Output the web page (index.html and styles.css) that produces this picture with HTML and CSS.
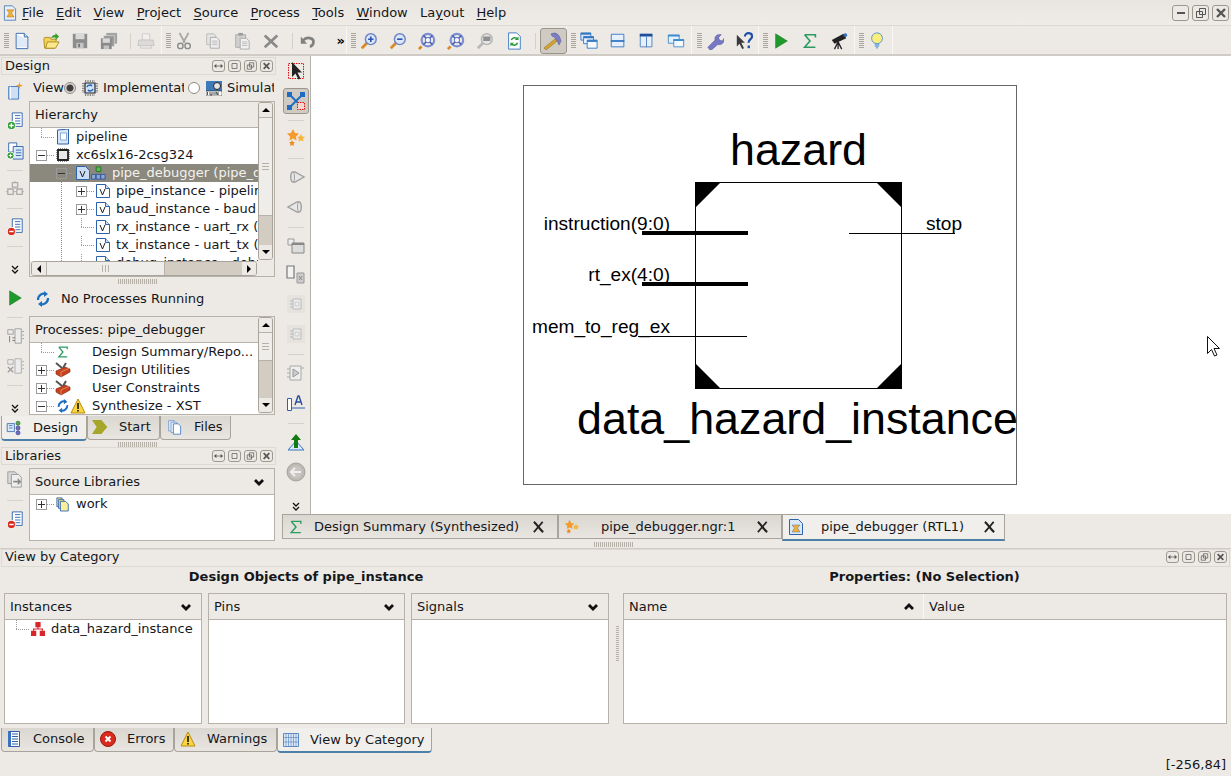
FILE: index.html
```html
<!DOCTYPE html>
<html lang="en">
<head>
    <meta charset="UTF-8">
    <title>ISE Project Navigator</title>
    <link rel="stylesheet" href="styles.css">
</head>
<body>
<svg class="defs" width="0" height="0">
    <defs>
        <symbol id="i-app" viewBox="0 0 20 20"><path d="M3 1h10l4 4v14H3z" fill="#e8f0fa" stroke="#3a6fb5"/><path d="M6 6h9l-3 4 3 5H6l3-5z" fill="#f2b035" stroke="#b5701a" stroke-width=".6"/></symbol>
        <symbol id="i-new" viewBox="0 0 20 20"><path d="M3.500 1.500h9l4 4v13h-13z" fill="#fff" stroke="#2d62ad"/><path d="M12.500 1.500v4h4" fill="#cfe0f5" stroke="#2d62ad"/><path d="M4.500 3v14h11V8z" fill="#dfeaf8"/></symbol>
        <symbol id="i-open" viewBox="0 0 20 20"><path d="M2 8l1-2h6l1 2h6l-2 10H3z" fill="#f4d25a" stroke="#a98a1e"/><path d="M4 18l2-7h13l-4 7z" fill="#fbe88a" stroke="#a98a1e"/><path d="M10 7c1-3 3-4 5-4V1l4 4-4 4V6c-2 0-4 0-5 1z" fill="#3da02e"/></symbol>
        <symbol id="i-save" viewBox="0 0 20 20"><path d="M2 2h16v16H2z" fill="#8d8d8d"/><path d="M5 2h10v6H5z" fill="#d9d9d9"/><path d="M6 12h8v6H6z" fill="#c4c4c4"/><path d="M8 13h2v4H8z" fill="#777"/></symbol>
        <symbol id="i-saveall" viewBox="0 0 20 20"><path d="M7 1h12v12H7z" fill="#a4a4a4"/><path d="M4 4h12v12H4z" fill="#999" stroke="#e8e8e8" stroke-width=".6"/><path d="M1 7h12v12H1z" fill="#8a8a8a"/><path d="M3 7h8v5H3z" fill="#d9d9d9"/><path d="M4 15h6v4H4z" fill="#c4c4c4"/></symbol>
        <symbol id="i-print" viewBox="0 0 20 20"><path d="M6 2h8v7H6z" fill="#f3f3f3" stroke="#c0c0c0"/><path d="M2 9h16l1 6H1z" fill="#d6d6d6" stroke="#b4b4b4"/><path d="M4 15h12v3H4z" fill="#e6e6e6" stroke="#bdbdbd"/></symbol>
        <symbol id="i-cut" viewBox="0 0 20 20"><path d="M5 1l6 11M15 1L9 12" stroke="#a5a5a5" stroke-width="2" fill="none"/><circle cx="6" cy="15.500" r="3" fill="none" stroke="#8d8d8d" stroke-width="1.600"/><circle cx="14" cy="15.500" r="3" fill="none" stroke="#8d8d8d" stroke-width="1.600"/></symbol>
        <symbol id="i-copy" viewBox="0 0 20 20"><path d="M3 2h8l2 2v10H3z" fill="#e4e4e4" stroke="#b8b8b8"/><path d="M7 6h7l3 3v9H7z" fill="#efefef" stroke="#a8a8a8"/><path d="M9 10h6M9 12h6M9 14h6" stroke="#bbb"/></symbol>
        <symbol id="i-paste" viewBox="0 0 20 20"><path d="M3 3h11v14H3z" fill="#d0d0d0" stroke="#aaa"/><path d="M6 1h5v3H6z" fill="#9a9a9a"/><path d="M8 7h7l3 3v9H8z" fill="#f0f0f0" stroke="#a8a8a8"/><path d="M10 11h6M10 13h6M10 15h6" stroke="#bbb"/></symbol>
        <symbol id="i-del" viewBox="0 0 20 20"><path d="M3 4l14 13M17 4L3 17" stroke="#8a8a8a" stroke-width="3" fill="none"/></symbol>
        <symbol id="i-undo" viewBox="0 0 20 20"><path d="M5 9c3-4 12-3 11 3-.3 2-2 4-4 4" stroke="#808080" stroke-width="3" fill="none"/><path d="M2 5v8h7z" fill="#808080"/></symbol>
        <symbol id="i-zin" viewBox="0 0 20 20"><path d="M2 18l6-6" stroke="#d88a28" stroke-width="3"/><circle cx="12" cy="8" r="6" fill="#dbe6f7" stroke="#6f85c8" stroke-width="1.600"/><path d="M9 8h6M12 5v6" stroke="#2b55b5" stroke-width="1.800"/></symbol>
        <symbol id="i-zout" viewBox="0 0 20 20"><path d="M2 18l6-6" stroke="#d88a28" stroke-width="3"/><circle cx="12" cy="8" r="6" fill="#dbe6f7" stroke="#6f85c8" stroke-width="1.600"/><path d="M9 8h6" stroke="#2b55b5" stroke-width="1.800"/></symbol>
        <symbol id="i-zfull" viewBox="0 0 20 20"><path d="M1 19l3-3" stroke="#d88a28" stroke-width="3"/><circle cx="11" cy="9" r="7" fill="none" stroke="#7d8ed0" stroke-width="2.400"/><circle cx="11" cy="9" r="3" fill="#f2f4fb" stroke="#4a63bd"/><path d="M6 4l3 3M16 4l-3 3M6 14l3-3M16 14l-3-3" stroke="#3e58b4" stroke-width="1.600"/></symbol>
        <symbol id="i-zsel" viewBox="0 0 20 20"><path d="M2 18l6-6" stroke="#b9b9b9" stroke-width="3"/><circle cx="12" cy="8" r="6" fill="#e4e4e4" stroke="#b5b5b5" stroke-width="1.600"/><path d="M8 5h8v5H8z" fill="#8f8f8f"/></symbol>
        <symbol id="i-refresh" viewBox="0 0 20 20"><path d="M4 1h9l4 4v14H4z" fill="#fff" stroke="#3a74c0"/><path d="M7 9a4 4 0 0 1 7-1M14 12a4 4 0 0 1-7 1" stroke="#2c9a3a" stroke-width="1.800" fill="none"/><path d="M15 5v4h-4zM6 16v-4h4z" fill="#2c9a3a"/></symbol>
        <symbol id="i-hammer" viewBox="0 0 20 20"><path d="M1 17l11-9 2 2-11 9z" fill="#d5a52c" stroke="#94701a" stroke-width=".6"/><path d="M8 3c4-2 8-1 10 7l-2 4c-2-5-3-7-7-9z" fill="#7b7fc2" stroke="#5a5d9e" stroke-width=".6"/></symbol>
        <symbol id="i-cascade" viewBox="0 0 20 20"><path d="M1 1h11v8H1z" fill="#dbe9f9" stroke="#3277c4"/><path d="M1 1h11v2H1z" fill="#3277c4"/><path d="M4 5h11v8H4z" fill="#eef5fd" stroke="#3277c4"/><path d="M4 5h11v2H4z" fill="#3277c4"/><path d="M8 9h11v9H8z" fill="#f4f9fe" stroke="#3277c4"/><path d="M8 9h11v2H8z" fill="#3277c4"/></symbol>
        <symbol id="i-hsplit" viewBox="0 0 20 20"><path d="M2.500 2.500h14v14h-14z" fill="#e6f0fb" stroke="#3277c4"/><path d="M2 9h15v2H2z" fill="#3277c4"/></symbol>
        <symbol id="i-vsplit" viewBox="0 0 20 20"><path d="M2.500 2.500h13v14h-13z" fill="#e6f0fb" stroke="#4b7fc0"/><path d="M2 2h14v3H2z" fill="#1f4f9a"/><path d="M9 5h1v12H9z" fill="#4b7fc0"/></symbol>
        <symbol id="i-tile" viewBox="0 0 20 20"><path d="M1.500 3.500h12v9h-12z" fill="#e6f0fb" stroke="#3d8ad0"/><path d="M1 3h13v2H1z" fill="#3d8ad0"/><path d="M7.500 8.500h11v8h-11z" fill="#f2f8fe" stroke="#3d8ad0"/><path d="M7 8h12v2H7z" fill="#3d8ad0"/></symbol>
        <symbol id="i-wrench" viewBox="0 0 20 20"><path d="M2 17l8-8c-1-4 2-7 7-6l-3 3 1 3 3 1 2-3c1 5-3 8-7 7l-8 7z" fill="#7678c4" stroke="#4f5196" stroke-width=".5"/></symbol>
        <symbol id="i-help" viewBox="0 0 20 20"><path d="M2 3v13l3-3 3 6 2-1-3-6h4z" fill="#3a3a3a"/><path d="M11 5c0-5 8-5 8 0 0 3-4 3-4 7" fill="none" stroke="#1f4fa8" stroke-width="2.400"/><path d="M14 15h2.600v3H14z" fill="#1f4fa8"/></symbol>
        <symbol id="i-run" viewBox="0 0 20 20"><path d="M4 2l13 8-13 8z" fill="#1f9a2c" stroke="#187522" stroke-width=".6"/></symbol>
        <symbol id="i-sigma" viewBox="0 0 20 20"><path d="M4 3h12v3M16 17H4l6-7-6-7" fill="none" stroke="#2b9b62" stroke-width="1.800"/></symbol>
        <symbol id="i-scope" viewBox="0 0 20 20"><path d="M2 9l13-7 3 5-13 6z" fill="#222"/><circle cx="17" cy="3.500" r="2" fill="#2f6fc0"/><path d="M9 11l-4 8M9 11v8M9 11l4 8" stroke="#222" stroke-width="1.400"/></symbol>
        <symbol id="i-bulb" viewBox="0 0 20 20"><circle cx="10" cy="7" r="6" fill="#fbee7a" stroke="#4d90cf"/><path d="M8 13h4v3H8z" fill="#8bbce6" stroke="#4d90cf" stroke-width=".6"/><path d="M9 17h2l-1 2z" fill="#2f6fc0"/></symbol>
        <symbol id="i-srcnew" viewBox="0 0 20 20"><path d="M3 5h11v14H3z" fill="#cfe0f5" stroke="#3a74c0"/><path d="M5 5v14" stroke="#fff"/><path d="M15 0l1 3 3 1-3 1-1 3-1-3-3-1 3-1z" fill="#f29a2e"/></symbol>
        <symbol id="i-srcadd" viewBox="0 0 20 20"><path d="M7 1h11v15H7z" fill="#fff" stroke="#2d62ad"/><path d="M10 4h6M10 7h6M10 10h6M10 13h6" stroke="#2d62ad"/><circle cx="6" cy="15" r="4.500" fill="#2f9e35" stroke="#fff"/><path d="M3.500 15h5M6 12.500v5" stroke="#fff" stroke-width="1.400"/></symbol>
        <symbol id="i-srccopy" viewBox="0 0 20 20"><path d="M3 1h9v10H3z" fill="#fff" stroke="#2d62ad"/><path d="M8 5h11v14H8z" fill="#dbe8f8" stroke="#2d62ad"/><path d="M11 9h6M11 12h6M11 15h6" stroke="#2d62ad"/><circle cx="5" cy="15" r="4" fill="#2f9e35" stroke="#fff"/><path d="M3 15h4M5 13v4" stroke="#fff" stroke-width="1.200"/></symbol>
        <symbol id="i-srcdel" viewBox="0 0 20 20"><path d="M7 1h11v15H7z" fill="#fff" stroke="#2d62ad"/><path d="M10 4h6M10 7h6M10 10h6M10 13h6" stroke="#2d62ad"/><circle cx="6" cy="15" r="4.500" fill="#d8281c" stroke="#fff"/><path d="M3.500 15h5" stroke="#fff" stroke-width="1.600"/></symbol>
        <symbol id="i-chips" viewBox="0 0 20 20"><path d="M7 3h6v5H7zM2 10h6v6H2zM12 10h6v6h-6z" fill="none" stroke="#aaa" stroke-width="1.400"/><path d="M10 1v2M10 8v2M0 13h2M8 13h4M18 13h2" stroke="#aaa"/></symbol>
        <symbol id="i-pinout" viewBox="0 0 20 20"><path d="M10 2h7v16h-7zM2 3h6v5H2z" fill="#ececec" stroke="#9c9c9c"/><path d="M7 12h3M7 15h3M4 10v7" stroke="#777"/><path d="M18 5h2M18 9h2M18 13h2" stroke="#9c9c9c"/></symbol>
        <symbol id="i-pinx" viewBox="0 0 20 20"><path d="M10 2h7v16h-7zM2 3h6v5H2z" fill="#ececec" stroke="#aaa"/><path d="M2 11l6 6M8 11l-6 6" stroke="#999" stroke-width="1.400"/><path d="M18 5h2M18 9h2M18 13h2" stroke="#aaa"/></symbol>
        <symbol id="i-libcopy" viewBox="0 0 20 20"><path d="M2 2h8l3 3v10H2z" fill="#d8d8d8" stroke="#999"/><path d="M6 5h8l3 3v11H6z" fill="#eee" stroke="#999"/><path d="M8 12h5V9l4 4-4 4v-3H8z" fill="#8b8b8b"/></symbol>
        <symbol id="i-chip" viewBox="1 1 14 14"><path d="M3 3h10v10H3z" fill="#e8e8e8" stroke="#222" stroke-width="1.800"/><path d="M2 3v10M14 3v10M3 2h10M3 14h10" stroke="#222" stroke-dasharray="1 1"/></symbol>
        <symbol id="i-impl" viewBox="0 0 16 16"><path d="M3 3h10v10H3z" fill="#cfe1f7" stroke="#222" stroke-width="1.200"/><path d="M1 3v10M15 3v10M3 1h10M3 15h10" stroke="#222" stroke-dasharray="1.200 1.200"/><path d="M5 7a3 3 0 0 1 5-1M11 9a3 3 0 0 1-5 1" stroke="#1d5fb0" stroke-width="1.400" fill="none"/></symbol>
        <symbol id="i-sim" viewBox="0 0 16 16"><path d="M0 1h16v10H0z" fill="#3d7ab8"/><circle cx="11" cy="6" r="3.500" fill="#e5e5e5" stroke="#222"/><path d="M0 11h16v5H0z" fill="#fff" stroke="#222" stroke-width=".6"/><path d="M1.500 12v3M4 12v3h2v-3M8 12v3M10 15v-3l2 3v-3" stroke="#222" stroke-width=".8" fill="none"/></symbol>
        <symbol id="i-page" viewBox="1 0 13 16"><path d="M2 1l11-1v15H2z" fill="#d9e7f7" stroke="#2d62ad"/><path d="M5 4h6v7H5z" fill="#fff" stroke="#6f9ad0" stroke-width=".8"/></symbol>
        <symbol id="i-vfile" viewBox="1 1 14 14"><path d="M1.500 1.500h9l4 4v9h-13z" fill="#fff" stroke="#2d62ad"/><path d="M10.500 1.500v4h4" fill="#cfe0f5" stroke="#2d62ad"/><path d="M5 6l2.500 6L10 6" fill="none" stroke="#222"/></symbol>
        <symbol id="i-vsel" viewBox="1 1 14 14"><path d="M1.500 1.500h9l4 4v9h-13z" fill="#c9ddf5" stroke="#2d62ad"/><path d="M5 6l2.500 6L10 6" fill="none" stroke="#222"/></symbol>
        <symbol id="i-grid4" viewBox="0 0 16 16"><path d="M5.500 1.500h5v5h-5z" fill="#5cb85c" stroke="#1f7a1f"/><path d="M.5 9.500h4.500v5H.5zM5.500 9.500H10v5H5.500zM10.500 9.500H15v5h-4.500z" fill="#8aa8d8" stroke="#35589c"/></symbol>
        <symbol id="i-tools" viewBox="0 0 16 16"><path d="M1 9l9-4 5 2v3l-9 5-5-3z" fill="#c8421e" stroke="#7a220e" stroke-width=".6"/><path d="M6 10l9-4M6 10v5" stroke="#eba184" stroke-width=".7"/><path d="M1 1l6 5M11 1L8 6" stroke="#555" stroke-width="2"/></symbol>
        <symbol id="i-sync" viewBox="0 0 16 16"><path d="M3 9a6 6 0 0 1 8-6" fill="none" stroke="#1b6fc0" stroke-width="2.200"/><path d="M13 7a6 6 0 0 1-8 6" fill="none" stroke="#1b6fc0" stroke-width="2.200"/><path d="M9 0v6l4-3zM7 16v-6l-4 3z" fill="#1b6fc0"/></symbol>
        <symbol id="i-warn" viewBox="0 0 16 16"><path d="M8 1l7 14H1z" fill="#fbd63d" stroke="#b68b14"/><path d="M7.200 5h1.600v6H7.200zM7.200 12h1.600v1.600H7.200z" fill="#111"/></symbol>
        <symbol id="i-err" viewBox="0 0 16 16"><circle cx="8" cy="8" r="7.500" fill="#d92a1c" stroke="#9a160d"/><path d="M5.500 5.500l5 5M10.500 5.500l-5 5" stroke="#fff" stroke-width="2"/></symbol>
        <symbol id="i-folder" viewBox="0 0 16 16"><path d="M1 1h6v10H1z" fill="#f7e27a" stroke="#2d62ad"/><path d="M3 3h6v10H3z" fill="#f7e27a" stroke="#2d62ad"/><path d="M5 5h6l3 3v8H5z" fill="#fbef9e" stroke="#2d62ad"/></symbol>
        <symbol id="i-star" viewBox="0 0 20 20"><path d="M7 1l2 4 4 .5-3 3 .5 4-3.500-2-3.500 2 .5-4-3-3 4-.5z" fill="#f59a2c"/><path d="M15 6l1.300 2.500 2.700.3-2 2 .5 2.700-2.500-1.300-2.500 1.300.5-2.700-2-2 2.700-.3z" fill="#f6b53e"/><path d="M6 12l1 2 2 .3-1.500 1.500.4 2.200L6 17l-1.900 1 .4-2.200L3 14.300l2-.3z" fill="#ee8a22"/></symbol>
        <symbol id="i-select" viewBox="0 0 20 20"><path d="M2.500 2.500h15v15h-15z" fill="none" stroke="#e01010" stroke-dasharray="1.500 1"/><path d="M6 1v15l3.500-3.500 3 6 2-1-3-6H16z" fill="#222"/></symbol>
        <symbol id="i-net" viewBox="0 0 20 20"><path d="M4 4l12 12M16 4L4 16" stroke="#1f6bc4" stroke-width="1.800"/><path d="M1 1h5v5H1zM14 1h5v5h-5zM1 14h5v5H1z" fill="#1f6bc4"/><path d="M11.500 11.500h7v7h-7z" fill="#f4d6d0" stroke="#e01010" stroke-dasharray="1.500 1"/></symbol>
        <symbol id="i-tri-r" viewBox="0 0 20 20"><path d="M7 5h2l9 5-9 5H7c-3 0-3-10 0-10z" fill="#e6e6e6" stroke="#a0a0a0" stroke-width="1.400"/><path d="M7 5c2 0 2 10 0 10" fill="none" stroke="#a0a0a0"/></symbol>
        <symbol id="i-tri-l" viewBox="0 0 20 20"><path d="M13 5h-2l-9 5 9 5h2c3 0 3-10 0-10z" fill="#e6e6e6" stroke="#a0a0a0" stroke-width="1.400"/><path d="M13 5c-2 0-2 10 0 10" fill="none" stroke="#a0a0a0"/></symbol>
        <symbol id="i-panel" viewBox="0 0 20 20"><path d="M2 3h6v6H2z" fill="#eee" stroke="#999"/><path d="M6 7h12v10H6z" fill="#ddd" stroke="#888"/><path d="M6 7h12v2H6z" fill="#888"/></symbol>
        <symbol id="i-pair" viewBox="0 0 20 20"><path d="M1 2h7v12H1z" fill="#f2f2f2" stroke="#777" stroke-width="1.200"/><path d="M11 9h7v10h-7z" fill="#ccc" stroke="#999"/><path d="M13 12l3 4M16 12l-3 4" stroke="#888"/></symbol>
        <symbol id="i-soft" viewBox="0 0 20 20"><path d="M1 1h18v18H1z" fill="#e6e3de"/><path d="M7 5h8v10H7z" fill="#ececec" stroke="#bbb"/><path d="M4 7h3M4 10h3M4 13h3" stroke="#bbb"/><path d="M9 8h4v4H9z" fill="none" stroke="#ccc"/></symbol>
        <symbol id="i-buf" viewBox="0 0 20 20"><path d="M4 3h11v14H4z" fill="#eee" stroke="#aaa"/><path d="M7 6l6 4-6 4z" fill="#ccc" stroke="#999"/><path d="M1 6h3M1 10h3M1 14h3M15 5h3" stroke="#aaa"/></symbol>
        <symbol id="i-text" viewBox="0 0 20 20"><path d="M1.500 5.500h4v12h-4z" fill="#fff" stroke="#2d62ad"/><path d="M9 12l3-9h1l3 9M10.300 9h4.400" fill="none" stroke="#2d4fa0" stroke-width="1.400"/><path d="M6 15h13" stroke="#2d62ad"/></symbol>
        <symbol id="i-up" viewBox="0 0 20 20"><path d="M2 18l8-9 8 9z" fill="#dbe8f8" stroke="#3a74c0"/><path d="M10 2l5 6h-3v8H8V8H5z" fill="#137a13"/></symbol>
        <symbol id="i-back" viewBox="0 0 20 20"><circle cx="10" cy="10" r="9" fill="#bdbab6" stroke="#a5a29e"/><circle cx="10" cy="10" r="6" fill="#c9c6c2"/><path d="M15 10H6M9 6l-4 4 4 4" fill="none" stroke="#eee" stroke-width="2"/></symbol>
        <symbol id="i-design" viewBox="0 0 20 20"><path d="M1.500 4.500h9v10h-9z" fill="#dbe8f8" stroke="#2d62ad"/><path d="M4 7h4M4 10h4" stroke="#2d62ad"/><circle cx="15" cy="4" r="2.500" fill="#5aa25a" stroke="#2d7a2d"/><circle cx="15" cy="10" r="2.500" fill="#6f6fc0" stroke="#444499"/><circle cx="15" cy="16" r="2.500" fill="#6f6fc0" stroke="#444499"/></symbol>
        <symbol id="i-start" viewBox="0 0 24 16" preserveAspectRatio="none"><path d="M0 1h14l9 7-9 7H0l7-7z" fill="#a6a629"/></symbol>
        <symbol id="i-files" viewBox="0 0 20 20"><path d="M2 2h7v13H2z" fill="#dbe8f8" stroke="#7c9cca"/><path d="M5 4h7v13H5z" fill="#e9f0fb" stroke="#7c9cca"/><path d="M8 6h6l3 3v10H8z" fill="#fff" stroke="#3a74c0"/></symbol>
        <symbol id="i-console" viewBox="0 0 16 16"><path d="M2.500 .5h11v15h-11z" fill="#fff" stroke="#2d62ad"/><path d="M2 1h3v14H2z" fill="#3a74c0"/><path d="M6 3h6M6 5.500h6M6 8h6M6 10.500h6M6 13h6" stroke="#2d62ad"/></symbol>
        <symbol id="i-table" viewBox="0 0 16 16"><path d="M.5 1.500h15v13H.5z" fill="#e1ebf8" stroke="#5f8ac4"/><path d="M5.500 1v14M10.500 1v14M1 5.500h14M1 10h14M3 1v14M8 1v14M13 1v14" stroke="#5f8ac4" stroke-width=".7"/></symbol>
        <symbol id="i-hier" viewBox="0 0 16 16"><path d="M5 0h6v6H5zM0 10h6v6H0zM10 10h6v6h-6z" fill="#d8262a"/><path d="M8 5v3M3 10V8h10v2" fill="none" stroke="#d8262a" stroke-width="1.400"/></symbol>
        <symbol id="i-rtl" viewBox="0 0 16 16"><path d="M1.500 .5h9l4 4v11h-13z" fill="#dbe8f8" stroke="#2d62ad"/><path d="M4 6h8l-2.500 3L12 13H4l2.500-4z" fill="#f2b035" stroke="#2d62ad" stroke-width=".4"/></symbol>
        <symbol id="i-max" viewBox="0 0 14 14"><path d="M3.500 3.500h7v7h-7z" fill="none" stroke="#555"/></symbol>
        <symbol id="i-float" viewBox="0 0 14 14"><path d="M5.500 2.500h6v6h-6zM2.500 5.500h6v6h-6z" fill="none" stroke="#555"/></symbol>
        <symbol id="i-close" viewBox="0 0 14 14"><path d="M3 3l8 8M11 3l-8 8" stroke="#555" stroke-width="2.400"/></symbol>
        <symbol id="i-dock" viewBox="0 0 14 14"><path d="M1 7h12" stroke="#555"/><path d="M4 4L1 7l3 3zM10 4l3 3-3 3z" fill="#555"/></symbol>
        <symbol id="i-min" viewBox="0 0 14 14"><path d="M3 6h8v2H3z" fill="#555"/></symbol>
        <symbol id="i-tabx" viewBox="0 0 14 14"><path d="M2 1.500c3 2 6 8 10 11" fill="none" stroke="#222" stroke-width="2.400"/><path d="M11.500 1.500L2 12.500" stroke="#222" stroke-width="1.800"/></symbol>
        <symbol id="i-chev" viewBox="0 0 10 8"><path d="M0 3l5 5 5-5-2-2-3 3-3-3z" fill="#111"/></symbol>
        <symbol id="i-dchev" viewBox="0 0 8 10"><path d="M1 1l3 3 3-3M1 5l3 3 3-3" fill="none" stroke="#111" stroke-width="1.300"/></symbol>
    </defs>
</svg>

<div class="menubar">
    <svg class="menu-icon"><use href="#i-app"/></svg>
    <span class="menu-item"><u>F</u>ile</span>
    <span class="menu-item"><u>E</u>dit</span>
    <span class="menu-item"><u>V</u>iew</span>
    <span class="menu-item"><u>P</u>roject</span>
    <span class="menu-item"><u>S</u>ource</span>
    <span class="menu-item"><u>P</u>rocess</span>
    <span class="menu-item"><u>T</u>ools</span>
    <span class="menu-item"><u>W</u>indow</span>
    <span class="menu-item">La<u>y</u>out</span>
    <span class="menu-item"><u>H</u>elp</span>
    <div class="win-controls">
        <span class="win-btn big"><svg><use href="#i-min"/></svg></span>
        <span class="win-btn big"><svg><use href="#i-float"/></svg></span>
        <span class="win-btn big"><svg><use href="#i-close"/></svg></span>
    </div>
</div>

<div class="toolbar">
    <div class="tb-group g-file">
        <i class="grip"></i>
        <svg class="tb"><use href="#i-new"/></svg>
        <svg class="tb"><use href="#i-open"/></svg>
        <svg class="tb"><use href="#i-save"/></svg>
        <svg class="tb"><use href="#i-saveall"/></svg>
        <i class="tb-sep"></i>
        <svg class="tb faint"><use href="#i-print"/></svg>
    </div>
    <div class="tb-group g-edit">
        <i class="grip"></i>
        <svg class="tb"><use href="#i-cut"/></svg>
        <svg class="tb"><use href="#i-copy"/></svg>
        <svg class="tb"><use href="#i-paste"/></svg>
        <svg class="tb"><use href="#i-del"/></svg>
        <i class="tb-sep"></i>
        <svg class="tb"><use href="#i-undo"/></svg>
        <span class="more">»</span>
    </div>
    <div class="tb-group g-zoom">
        <i class="grip"></i>
        <svg class="tb"><use href="#i-zin"/></svg>
        <svg class="tb"><use href="#i-zout"/></svg>
        <svg class="tb"><use href="#i-zfull"/></svg>
        <svg class="tb"><use href="#i-zfull"/></svg>
        <svg class="tb"><use href="#i-zsel"/></svg>
        <svg class="tb"><use href="#i-refresh"/></svg>
        <i class="tb-sep"></i>
        <span class="tb-active"><svg class="tb-in"><use href="#i-hammer"/></svg></span>
    </div>
    <div class="tb-group g-win">
        <i class="grip"></i>
        <svg class="tb"><use href="#i-cascade"/></svg>
        <svg class="tb"><use href="#i-hsplit"/></svg>
        <svg class="tb"><use href="#i-vsplit"/></svg>
        <svg class="tb"><use href="#i-tile"/></svg>
    </div>
    <div class="tb-group g-help">
        <i class="grip"></i>
        <svg class="tb"><use href="#i-wrench"/></svg>
        <svg class="tb"><use href="#i-help"/></svg>
    </div>
    <div class="tb-group g-run">
        <i class="grip"></i>
        <svg class="tb"><use href="#i-run"/></svg>
        <svg class="tb"><use href="#i-sigma"/></svg>
        <svg class="tb"><use href="#i-scope"/></svg>
    </div>
    <div class="tb-group">
        <i class="grip"></i>
        <svg class="tb"><use href="#i-bulb"/></svg>
    </div>
</div>

<div class="main">
    <div class="left">
        <div class="titlebar">
            <span>Design</span>
            <div class="dock-btns">
                <span class="win-btn"><svg><use href="#i-dock"/></svg></span>
                <span class="win-btn"><svg><use href="#i-max"/></svg></span>
                <span class="win-btn"><svg><use href="#i-float"/></svg></span>
                <span class="win-btn"><svg><use href="#i-close"/></svg></span>
            </div>
        </div>

        <div class="section sec-hier">
            <div class="strip">
                <svg class="st"><use href="#i-srcnew"/></svg>
                <svg class="st"><use href="#i-srcadd"/></svg>
                <svg class="st"><use href="#i-srccopy"/></svg>
                <i class="st-sep"></i>
                <svg class="st"><use href="#i-chips"/></svg>
                <i class="st-sep"></i>
                <svg class="st"><use href="#i-srcdel"/></svg>
                <i class="st-sep"></i>
                <svg class="dchev"><use href="#i-dchev"/></svg>
            </div>
            <div class="sec-body">
                <div class="view-row">
                    <span class="view-lbl">View</span>
                    <i class="radio on"></i>
                    <svg class="view-ic"><use href="#i-impl"/></svg>
                    <span class="view-txt w-impl">Implementation</span>
                    <i class="radio"></i>
                    <svg class="view-ic"><use href="#i-sim"/></svg>
                    <span class="view-txt w-sim">Simulation</span>
                </div>
                <div class="frame frame-hier">
                    <div class="frame-main">
                        <div class="frame-head">Hierarchy</div>
                        <div class="tree">
                            <div class="row lvl0 leaf"><i class="stub"></i><svg class="ic"><use href="#i-page"/></svg><span class="lbl">pipeline</span></div>
                            <div class="row lvl0"><i class="twist minus"></i><svg class="ic"><use href="#i-chip"/></svg><span class="lbl">xc6slx16-2csg324</span></div>
                            <div class="row lvl1 selected"><i class="twist minus"></i><svg class="ic"><use href="#i-vsel"/></svg><svg class="ic2"><use href="#i-grid4"/></svg><span class="lbl">pipe_debugger (pipe_debugger.v)</span></div>
                            <div class="row lvl2 guide"><i class="twist plus"></i><svg class="ic"><use href="#i-vfile"/></svg><span class="lbl">pipe_instance - pipeline (pipeline.v)</span></div>
                            <div class="row lvl2 guide"><i class="twist plus"></i><svg class="ic"><use href="#i-vfile"/></svg><span class="lbl">baud_instance - baud (baud.v)</span></div>
                            <div class="row lvl2 guide leaf"><i class="stub"></i><svg class="ic"><use href="#i-vfile"/></svg><span class="lbl">rx_instance - uart_rx (uart_rx.v)</span></div>
                            <div class="row lvl2 guide leaf"><i class="stub"></i><svg class="ic"><use href="#i-vfile"/></svg><span class="lbl">tx_instance - uart_tx (uart_tx.v)</span></div>
                            <div class="row lvl2 guide leaf"><i class="stub"></i><svg class="ic"><use href="#i-vfile"/></svg><span class="lbl">debug_instance - debug (debug.v)</span></div>
                        </div>
                        <div class="hscroll">
                            <span class="sb-btn"><i class="arr left-a"></i></span>
                            <span class="sb-thumb-h"><i class="sb-grip-h"></i></span>
                            <span class="sb-track"></span>
                            <span class="sb-btn"><i class="arr right-a"></i></span>
                        </div>
                    </div>
                    <div class="vscroll">
                        <span class="sb-btn"><i class="arr up-a"></i></span>
                        <span class="sb-thumb-v t-hier"><i class="sb-grip-v"></i></span>
                        <span class="sb-track"></span>
                        <span class="sb-btn"><i class="arr down-a"></i></span>
                    </div>
                </div>
            </div>
        </div>

        <div class="splitter"><i class="split-grip"></i></div>

        <div class="section sec-proc">
            <div class="strip">
                <svg class="st st-run"><use href="#i-run"/></svg>
                <i class="st-sep"></i>
                <svg class="st"><use href="#i-pinout"/></svg>
                <svg class="st"><use href="#i-pinx"/></svg>
                <i class="st-sep"></i>
                <svg class="dchev"><use href="#i-dchev"/></svg>
            </div>
            <div class="sec-body">
                <div class="status-row"><svg class="ic-s"><use href="#i-sync"/></svg><span>No Processes Running</span></div>
                <div class="frame frame-proc">
                    <div class="frame-main">
                        <div class="frame-head">Processes: pipe_debugger</div>
                        <div class="tree">
                            <div class="row lvl0 leaf"><i class="stub"></i><svg class="ic"><use href="#i-sigma"/></svg><span class="lbl proc">Design Summary/Repo...</span></div>
                            <div class="row lvl0"><i class="twist plus"></i><svg class="ic ic-big"><use href="#i-tools"/></svg><span class="lbl proc">Design Utilities</span></div>
                            <div class="row lvl0"><i class="twist plus"></i><svg class="ic ic-big"><use href="#i-tools"/></svg><span class="lbl proc">User Constraints</span></div>
                            <div class="row lvl0"><i class="twist minus"></i><svg class="ic"><use href="#i-sync"/></svg><svg class="ic3"><use href="#i-warn"/></svg><span class="lbl">Synthesize - XST</span></div>
                        </div>
                    </div>
                    <div class="vscroll">
                        <span class="sb-btn"><i class="arr up-a"></i></span>
                        <span class="sb-thumb-v t-proc"><i class="sb-grip-v"></i></span>
                        <span class="sb-track"></span>
                        <span class="sb-btn"><i class="arr down-a"></i></span>
                    </div>
                </div>
            </div>
        </div>

        <div class="tabs tabs-left">
            <span class="tab active t-design"><svg class="tab-ic"><use href="#i-design"/></svg>Design</span>
            <span class="tab t-start"><svg class="tab-ic"><use href="#i-start"/></svg>Start</span>
            <span class="tab t-files"><svg class="tab-ic"><use href="#i-files"/></svg>Files</span>
        </div>

        <div class="splitter short"><i class="split-grip"></i></div>

        <div class="titlebar">
            <span>Libraries</span>
            <div class="dock-btns">
                <span class="win-btn"><svg><use href="#i-dock"/></svg></span>
                <span class="win-btn"><svg><use href="#i-max"/></svg></span>
                <span class="win-btn"><svg><use href="#i-float"/></svg></span>
                <span class="win-btn"><svg><use href="#i-close"/></svg></span>
            </div>
        </div>

        <div class="section sec-lib">
            <div class="strip">
                <svg class="st"><use href="#i-libcopy"/></svg>
                <i class="st-sep"></i>
                <svg class="st"><use href="#i-srcdel"/></svg>
            </div>
            <div class="sec-body">
                <div class="frame frame-lib">
                    <div class="frame-main">
                        <div class="frame-head has-chev">Source Libraries<svg class="chev"><use href="#i-chev"/></svg></div>
                        <div class="tree">
                            <div class="row lvl0"><i class="twist plus"></i><svg class="ic"><use href="#i-folder"/></svg><span class="lbl">work</span></div>
                        </div>
                    </div>
                </div>
            </div>
        </div>
    </div>

    <div class="right">
        <div class="work">
            <div class="vtools">
                <svg class="vt"><use href="#i-select"/></svg>
                <span class="vt-active"><svg class="vt-in"><use href="#i-net"/></svg></span>
                <i class="vt-sep"></i>
                <svg class="vt"><use href="#i-star"/></svg>
                <i class="vt-sep"></i>
                <svg class="vt"><use href="#i-tri-r"/></svg>
                <svg class="vt"><use href="#i-tri-l"/></svg>
                <i class="vt-sep"></i>
                <svg class="vt"><use href="#i-panel"/></svg>
                <svg class="vt vt-pair"><use href="#i-pair"/></svg>
                <svg class="vt"><use href="#i-soft"/></svg>
                <svg class="vt"><use href="#i-soft"/></svg>
                <i class="vt-sep"></i>
                <svg class="vt"><use href="#i-buf"/></svg>
                <svg class="vt"><use href="#i-text"/></svg>
                <i class="vt-sep"></i>
                <svg class="vt"><use href="#i-up"/></svg>
                <svg class="vt"><use href="#i-back"/></svg>
                <svg class="dchev"><use href="#i-dchev"/></svg>
            </div>
            <div class="canvas">
                <svg class="schem" viewBox="311 56 920 458">
                    <rect x="523.500" y="85.500" width="493" height="399" fill="#fff" stroke="#666"/>
                    <rect x="695.500" y="182.500" width="206" height="206" fill="#fff" stroke="#000"/>
                    <path d="M695 182h26l-26 26zM902 182h-26l26 26zM695 389h26l-26-26zM902 389h-26l26-26z" fill="#000"/>
                    <path d="M642 233h106M642 284h106" stroke="#000" stroke-width="4"/>
                    <path d="M638 336.500h109M849 233.500h106" stroke="#000"/>
                    <text class="big" x="798.500" y="165" text-anchor="middle">hazard</text>
                    <text class="big" x="797.500" y="434" text-anchor="middle">data_hazard_instance</text>
                    <text class="pin" x="670" y="230" text-anchor="end">instruction(9:0)</text>
                    <text class="pin" x="670" y="281" text-anchor="end">rt_ex(4:0)</text>
                    <text class="pin" x="670" y="333" text-anchor="end">mem_to_reg_ex</text>
                    <text class="pin" x="926" y="230">stop</text>
                    <path d="M1207.500 336.500v17l4-4 3 6.500 2.500-1-3-6.500h5.500z" fill="#fff" stroke="#111"/>
                </svg>
            </div>
        </div>
        <div class="tabs tabs-doc">
            <span class="tab doc d-sum"><svg class="doc-ic"><use href="#i-sigma"/></svg><span class="doc-lbl">Design Summary (Synthesized)</span><svg class="doc-x"><use href="#i-tabx"/></svg></span>
            <span class="tab doc d-ngr"><svg class="doc-ic"><use href="#i-star"/></svg><span class="doc-lbl">pipe_debugger.ngr:1</span><svg class="doc-x"><use href="#i-tabx"/></svg></span>
            <span class="tab doc active d-rtl"><svg class="doc-ic"><use href="#i-rtl"/></svg><span class="doc-lbl">pipe_debugger (RTL1)</span><svg class="doc-x"><use href="#i-tabx"/></svg></span>
        </div>
        <div class="splitter doc-split"><i class="split-grip"></i></div>
    </div>
</div>

<div class="bottom">
    <div class="titlebar wide">
        <span>View by Category</span>
        <div class="dock-btns">
            <span class="win-btn"><svg><use href="#i-dock"/></svg></span>
            <span class="win-btn"><svg><use href="#i-max"/></svg></span>
            <span class="win-btn"><svg><use href="#i-float"/></svg></span>
            <span class="win-btn"><svg><use href="#i-close"/></svg></span>
        </div>
    </div>
    <div class="cat-labels">
        <b class="cat-left">Design Objects of pipe_instance</b>
        <b class="cat-right">Properties: (No Selection)</b>
    </div>
    <div class="cat-panels">
        <div class="frame col-inst">
            <div class="frame-main">
                <div class="frame-head has-chev">Instances<svg class="chev"><use href="#i-chev"/></svg></div>
                <div class="tree">
                    <div class="row inst leaf"><i class="stub"></i><svg class="ic"><use href="#i-hier"/></svg><span class="lbl">data_hazard_instance</span></div>
                </div>
            </div>
        </div>
        <div class="frame col-pins">
            <div class="frame-main">
                <div class="frame-head has-chev">Pins<svg class="chev"><use href="#i-chev"/></svg></div>
                <div class="tree"></div>
            </div>
        </div>
        <div class="frame col-sig">
            <div class="frame-main">
                <div class="frame-head has-chev">Signals<svg class="chev"><use href="#i-chev"/></svg></div>
                <div class="tree"></div>
            </div>
        </div>
        <i class="v-grip"></i>
        <div class="frame col-props">
            <div class="frame-main">
                <div class="frame-head prop-head">
                    <span class="prop-name">Name<svg class="chev flip"><use href="#i-chev"/></svg></span>
                    <span class="prop-val">Value</span>
                </div>
                <div class="tree"></div>
            </div>
        </div>
    </div>
    <div class="tabs tabs-bottom">
        <span class="tab b-con"><svg class="tab-ic"><use href="#i-console"/></svg>Console</span>
        <span class="tab b-err"><svg class="tab-ic"><use href="#i-err"/></svg>Errors</span>
        <span class="tab b-warn"><svg class="tab-ic"><use href="#i-warn"/></svg>Warnings</span>
        <span class="tab active b-view"><svg class="tab-ic"><use href="#i-table"/></svg>View by Category</span>
    </div>
    <div class="statusbar">[-256,84]</div>
</div>
</body>
</html>
```

FILE: styles.css
```css
* {
    box-sizing: border-box;
}
html, body {
    margin: 0;
    height: 100%;
}
body {
    width: 1231px;
    height: 776px;
    overflow: hidden;
    background-color: #edeae5;
    color: #14171c;
    font-family: "DejaVu Sans", sans-serif;
    font-size: 13px;
    line-height: 16px;
}
i {
    display: block;
    font-style: normal;
}
.defs {
    position: absolute;
}

/* menu */
.menubar {
    display: flex;
    align-items: center;
    height: 26px;
    padding-left: 2px;
    border-bottom: 1px solid #dcd8d2;
    background: linear-gradient(#e9e6e1, #efece8);
}
.menu-icon {
    width: 16px;
    height: 18px;
    margin-right: 4px;
}
.menu-item {
    margin-right: 12.300px;
}
.menu-item u {
    text-underline-offset: 2px;
}
.win-controls {
    display: flex;
    gap: 3px;
    margin-left: auto;
    margin-right: 2px;
}
.win-btn {
    display: flex;
    align-items: center;
    justify-content: center;
    flex: none;
    width: 13px;
    height: 12px;
    border: 1px solid #9c9890;
    border-radius: 3px;
    background-color: #ece9e4;
}
.win-btn svg {
    width: 11px;
    height: 10px;
}
.win-btn.big {
    width: 17px;
    height: 16px;
}
.win-btn.big svg {
    width: 14px;
    height: 14px;
}

/* main toolbar */
.toolbar {
    display: flex;
    height: 30px;
    border-bottom: 2px solid #d0ccc5;
}
.tb-group {
    display: flex;
    align-items: center;
    flex: none;
    height: 28px;
    padding: 2px 0 0 4px;
    border-right: 1px solid #f8f7f5;
}
.g-file { width: 162px; }
.g-edit { width: 185px; }
.g-zoom { width: 220px; }
.g-win { width: 125px; }
.g-help { width: 67px; padding-left: 5px; }
.g-run { width: 96px; }
.grip {
    flex: none;
    width: 5px;
    height: 16px;
    margin-right: -1.500px;
    background: repeating-linear-gradient(to bottom, #a9a59d 0 1px, transparent 1px 2px);
}
.tb {
    width: 18px;
    height: 18px;
    margin: 0 5.500px;
    flex: none;
}
.faint {
    opacity: .7;
}
.tb-sep {
    flex: none;
    width: 1px;
    height: 16px;
    margin: 0 1px 0 6px;
    background-color: #d4d0c9;
}
.tb-active {
    display: flex;
    align-items: center;
    justify-content: center;
    flex: none;
    width: 27px;
    height: 26px;
    margin-left: 3px;
    border: 1px solid #9b968d;
    border-radius: 3px;
    background-color: #cfcac2;
}
.tb-in {
    width: 20px;
    height: 20px;
}
.more {
    flex: none;
    width: 10px;
    margin-left: 14px;
    font-weight: bold;
    color: #000;
}

/* layout */
.main {
    display: flex;
    height: 491px;
}
.left {
    width: 280px;
    padding-top: 1px;
}
.right {
    flex: 1;
    padding-left: 2px;
}
.work {
    display: flex;
    height: 458px;
}
.titlebar {
    display: flex;
    align-items: center;
    justify-content: space-between;
    width: 275px;
    height: 18px;
    margin-left: 1px;
    padding: 0 2px 0 3px;
    border: 1px solid #dcd8d2;
}
.titlebar.wide {
    width: 1229px;
    padding-bottom: 2px;
}
.dock-btns {
    display: flex;
    gap: 3px;
}
.section {
    display: flex;
}
.sec-hier { height: 201px; margin-top: 1px; }
.sec-proc { height: 131px; }
.sec-lib { height: 76px; margin-top: 3px; }
.strip {
    display: flex;
    flex-direction: column;
    align-items: center;
    flex: none;
    width: 29px;
}
.st {
    flex: none;
    width: 18px;
    height: 18px;
    margin: 6px 0;
}
.st-run {
    margin-top: 4px;
}
.st-sep {
    flex: none;
    width: 16px;
    height: 1px;
    margin: 4px 0 3px;
    background-color: #d6d2cb;
}
.dchev {
    flex: none;
    width: 8px;
    height: 10px;
    margin-top: 15px;
}
.sec-lib .st:first-child {
    margin-top: 2px;
}
.sec-lib .st-sep {
    margin: 6px 0 4px;
}
.sec-body {
    flex: 1;
    min-width: 0;
    width: 246px;
    margin-right: 5px;
}
.view-row {
    display: flex;
    align-items: center;
    height: 25px;
    padding: 0 0 1px 4px;
    overflow: hidden;
    white-space: nowrap;
}
.view-lbl {
    width: 31px;
    overflow: hidden;
}
.radio {
    flex: none;
    width: 12px;
    height: 12px;
    border: 1px solid #8f8b84;
    border-radius: 50%;
    background-color: #fff;
}
.radio.on {
    background: radial-gradient(circle, #3f3f3f 0 3px, #dcd9d4 4px);
}
.view-ic {
    flex: none;
    width: 16px;
    height: 16px;
    margin: 0 5px 0 6px;
}
.view-txt {
    overflow: hidden;
}
.w-impl { width: 81px; margin-right: 4px; }
.w-sim { width: 47px; }

/* framed lists */
.frame {
    display: flex;
    border: 1px solid #b7b2a9;
    background-color: #edeae5;
}
.frame-hier { height: 176px; }
.frame-proc { height: 99px; }
.frame-lib { height: 73px; }
.frame-main {
    display: flex;
    flex-direction: column;
    flex: 1;
    min-width: 0;
}
.frame-head {
    flex: none;
    height: 26px;
    padding: 5px 5px 0;
    border-bottom: 1px solid #b7b2a9;
    white-space: nowrap;
}
.has-chev {
    display: flex;
    align-items: center;
    justify-content: space-between;
    padding: 0 10px 0 5px;
}
.chev {
    width: 10px;
    height: 8px;
}
.chev.flip {
    transform: scaleY(-1);
}
.tree {
    flex: 1;
    min-height: 0;
    overflow: hidden;
    background-color: #fff;
}
.row {
    display: flex;
    align-items: center;
    height: 18px;
    white-space: nowrap;
    overflow: hidden;
}
.lvl0 { padding-left: 6px; }
.lvl1 { padding-left: 26px; }
.lvl2 { padding-left: 46px; }
.inst { padding-left: 6px; }
.guide {
    background: repeating-linear-gradient(to bottom, #8f8f8f 0 1px, transparent 1px 2px) 31px 0 / 1px 100% no-repeat;
}
.selected {
    background-color: #8b887e;
    color: #f4f2ee;
}
.twist, .stub {
    flex: none;
    width: 20px;
    height: 11px;
}
.twist {
    position: relative;
    background:
        repeating-linear-gradient(to right, #999 0 1px, transparent 1px 2px) 11px 5px / 8px 1px no-repeat,
        linear-gradient(#9a9a9a, #9a9a9a) 0 0 / 11px 11px no-repeat;
}
.twist::before {
    content: "";
    position: absolute;
    left: 1px;
    top: 1px;
    width: 9px;
    height: 9px;
    background: linear-gradient(#333, #333) 1px 4px / 7px 1px no-repeat #fff;
}
.twist.plus::before {
    background:
        linear-gradient(#333, #333) 1px 4px / 7px 1px no-repeat,
        linear-gradient(#333, #333) 4px 1px / 1px 7px no-repeat,
        #fff;
}
.selected .twist::before {
    background: linear-gradient(#333, #333) 1px 4px / 7px 1px no-repeat #8b887e;
}
.stub {
    height: 18px;
    background:
        repeating-linear-gradient(to right, #999 0 1px, transparent 1px 2px) 5px 9px / 14px 1px no-repeat,
        repeating-linear-gradient(to bottom, #999 0 1px, transparent 1px 2px) 5px 0 / 1px 9px no-repeat;
}
.ic {
    flex: none;
    width: 14px;
    height: 16px;
}
.ic-big {
    width: 16px;
    margin: 0 -1px;
}
.ic2 {
    flex: none;
    width: 15px;
    height: 16px;
    margin-left: 1px;
}
.ic3 {
    flex: none;
    width: 16px;
    height: 16px;
}
.lbl {
    margin-left: 6px;
}
.lbl.proc {
    margin-left: 22px;
}

/* scrollbars */
.vscroll {
    display: flex;
    flex-direction: column;
    flex: none;
    width: 15px;
    margin: 0 1px 1px 0;
    border: 1px solid #a9a49b;
    border-radius: 3px;
    overflow: hidden;
}
.frame-hier .vscroll {
    height: 158px;
}
.hscroll {
    display: flex;
    flex: none;
    height: 15px;
    margin: 0 1px;
    border: 1px solid #a9a49b;
    border-radius: 3px;
    overflow: hidden;
}
.sb-btn {
    display: flex;
    align-items: center;
    justify-content: center;
    flex: none;
    width: 14px;
    height: 14px;
    background-color: #edeae5;
}
.sb-track {
    flex: 1;
    background-color: #d2ccc3;
}
.sb-thumb-h {
    display: flex;
    align-items: center;
    justify-content: center;
    width: 119px;
    background-color: #efedea;
    border-left: 1px solid #b7b2a9;
    border-right: 1px solid #b7b2a9;
}
.sb-thumb-v {
    display: flex;
    align-items: center;
    justify-content: center;
    flex: none;
    background-color: #efedea;
    border-top: 1px solid #b7b2a9;
    border-bottom: 1px solid #b7b2a9;
}
.t-hier { height: 99px; }
.t-proc { height: 29px; }
.sb-grip-h {
    width: 7px;
    height: 7px;
    background: repeating-linear-gradient(to right, #b5b0a8 0 1px, transparent 1px 3px);
}
.sb-grip-v {
    width: 7px;
    height: 7px;
    background: repeating-linear-gradient(to bottom, #b5b0a8 0 1px, transparent 1px 3px);
}
.arr {
    width: 0;
    height: 0;
    border: 4px solid transparent;
}
.up-a { border-bottom-color: #000; margin-top: -4px; }
.down-a { border-top-color: #000; margin-bottom: -4px; }
.left-a { border-right-color: #000; margin-left: -4px; }
.right-a { border-left-color: #000; margin-right: -4px; }

/* splitters */
.splitter {
    display: flex;
    align-items: center;
    justify-content: center;
    height: 8px;
    width: 275px;
}
.splitter.short {
    height: 6px;
}
.split-grip {
    width: 40px;
    height: 5px;
    background: repeating-linear-gradient(to right, #b5b0a8 0 1px, transparent 1px 2px);
}
.doc-split {
    width: 664px;
    height: 7px;
}
.status-row {
    display: flex;
    align-items: center;
    height: 31px;
    padding: 0 0 4px 6px;
}
.ic-s {
    width: 16px;
    height: 16px;
    margin-right: 10px;
}

/* tabs */
.tabs {
    display: flex;
}
.tab {
    display: flex;
    align-items: center;
    height: 24px;
    border: 1px solid #a9a49b;
    border-top: 0;
    border-radius: 0 0 4px 4px;
    background: linear-gradient(#dad6d0, #e9e6e1);
    white-space: nowrap;
}
.tab.active {
    height: 25px;
    border-bottom: 2px solid #4e7fa8;
    background: #f1efeb;
}
.tab-ic {
    flex: none;
    width: 16px;
    height: 16px;
    margin: 0 11px 0 4px;
}
.tabs-left {
    margin-left: 1px;
}
.t-design { width: 86px; }
.t-start { width: 73px; padding-bottom: 2px; }
.t-files { width: 71px; padding-bottom: 2px; }
.t-files .tab-ic { margin-left: 6px; }
.tabs-doc .tab {
    height: 25px;
}
.tabs-doc .tab.active {
    height: 27px;
}
.tab.doc {
    border-top: 1px solid #a9a49b;
    border-radius: 0;
}
.doc-ic {
    flex: none;
    width: 16px;
    height: 16px;
    margin-left: 5px;
}
.doc-lbl {
    flex: 1;
}
.doc-x {
    flex: none;
    width: 13px;
    height: 14px;
    margin-right: 12px;
}
.d-sum { width: 276px; }
.d-sum .doc-lbl { padding-left: 10px; }
.d-ngr { width: 224px; }
.d-ngr .doc-lbl { padding-left: 21px; }
.d-rtl { width: 223px; }
.d-rtl .doc-lbl { padding-left: 17px; }
.d-rtl .doc-x { margin-right: 8px; }

/* bottom */
.bottom {
    margin-top: 1px;
    border-top: 1px solid #d0ccc5;
}
.cat-labels {
    display: flex;
    height: 26px;
    align-items: flex-start;
    padding: 2px 0 0 4px;
}
.cat-labels b {
    text-align: center;
}
.cat-left { width: 604px; }
.cat-right { width: 603px; margin-left: 15px; }
.cat-panels {
    display: flex;
    height: 131px;
    padding-left: 4px;
}
.col-inst { width: 198px; }
.col-pins { width: 197px; margin-left: 6px; }
.col-sig { width: 198px; margin-left: 6px; }
.col-props { width: 604px; }
.v-grip {
    width: 3px;
    height: 36px;
    margin: 33px 4px 0 7px;
    background: repeating-linear-gradient(to bottom, #b5b0a8 0 1px, transparent 1px 2px);
}
.prop-head {
    display: flex;
    padding: 0;
}
.prop-name {
    display: flex;
    align-items: center;
    justify-content: space-between;
    width: 300px;
    padding: 0 9px 0 5px;
    border-right: 1px solid #f8f7f5;
}
.prop-val {
    display: flex;
    align-items: center;
    padding-left: 5px;
}
.tabs-bottom {
    margin: 4px 0 0 1px;
}
.b-con { width: 93px; padding-bottom: 2px; }
.b-err { width: 80px; padding-bottom: 2px; }
.b-warn { width: 103px; padding-bottom: 2px; }
.b-view { width: 155px; }
.b-err .tab-ic, .b-warn .tab-ic, .b-view .tab-ic { margin-left: 5px; }
.statusbar {
    height: 24px;
    padding: 4px 5px 0 0;
    text-align: right;
}

/* schematic */
.vtools {
    display: flex;
    flex-direction: column;
    align-items: center;
    flex: none;
    width: 27px;
}
.vt {
    width: 20px;
    height: 20px;
    margin: 5px 0;
    flex: none;
}
.vt-pair {
    margin-top: 3px;
}
.vt-active {
    display: flex;
    align-items: center;
    justify-content: center;
    flex: none;
    width: 26px;
    height: 26px;
    margin-top: 2px;
    border: 1px solid #9b968d;
    border-radius: 3px;
    background-color: #cfcac2;
}
.vt-in {
    width: 20px;
    height: 20px;
}
.vt-sep {
    flex: none;
    width: 16px;
    height: 1px;
    margin: 5px 0 3px;
    background-color: #d6d2cb;
}
.vt-active + .vt-sep {
    margin: 6px 0 2px;
}
.vtools .dchev {
    margin-top: auto;
    margin-bottom: 2px;
}
.canvas {
    flex: 1;
    margin-left: 1px;
    border-left: 1px solid #b7b2a9;
    background-color: #fff;
}
.schem {
    display: block;
    width: 920px;
    height: 458px;
}
.schem text {
    font-family: "Liberation Sans", Arial, sans-serif;
    fill: #000;
}
.schem .big {
    font-size: 44.800px;
}
.schem .pin {
    font-size: 19.100px;
}
```
